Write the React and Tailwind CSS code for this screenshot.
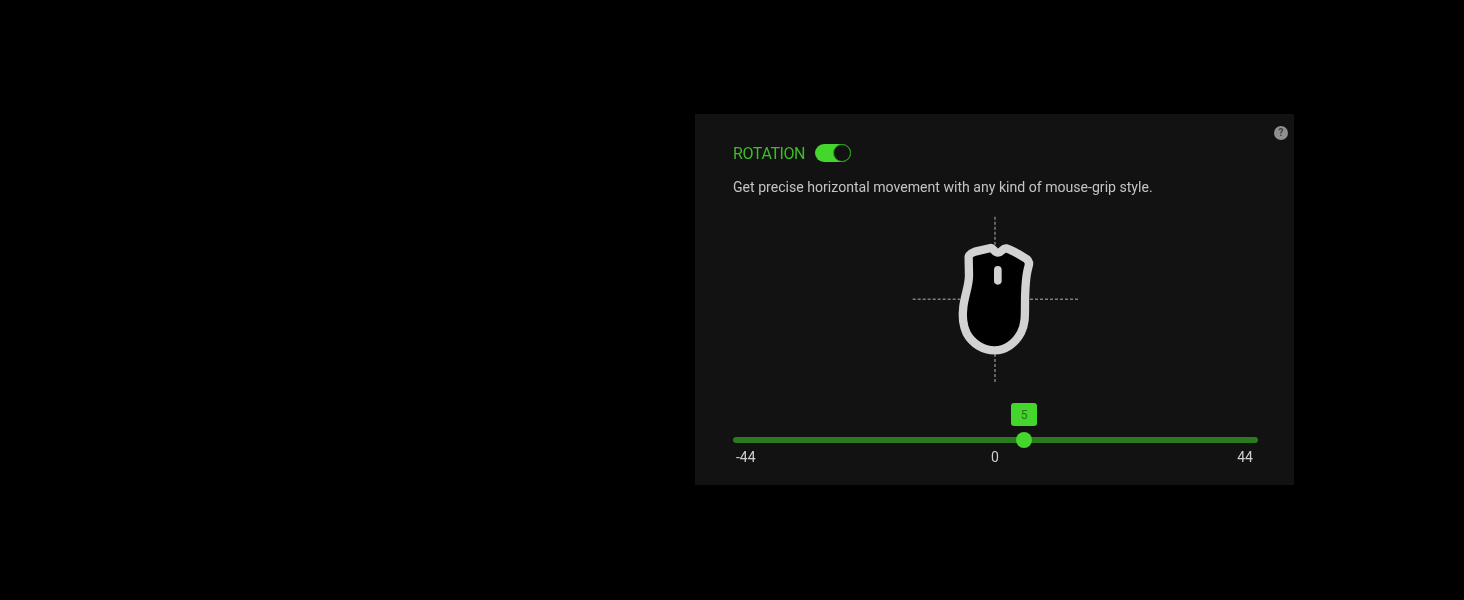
export default function App() {
  return (
    <div className="min-h-[600px] bg-black pl-[695px] pt-[114px] font-['Roboto',sans-serif]">
      <div className="h-[371px] w-[599px] bg-[#121212]">
        <div className="relative flex h-[371px] flex-col pl-[38px] pr-[36px] pt-[29px] blur-[0.4px]">
          <div className="absolute right-[6px] top-[12px] flex h-[14px] w-[14px] items-center justify-center rounded-full bg-[#8f8f8f] text-[10px] font-bold leading-none text-[#3c3c3c]">?</div>

          <div className="flex h-[19px] items-center gap-[10px]">
            <span className="w-[72px] translate-y-[1px] whitespace-nowrap text-[16px] leading-[19px] tracking-[-0.4px] text-[#3dbb29]">ROTATION</span>
            <div className="flex h-[18px] w-[36px] items-center justify-end rounded-full bg-[#44d62c]">
              <div className="h-[18px] w-[18px] rounded-full border-[1.5px] border-[#2f9a20] bg-[#121212]" />
            </div>
          </div>

          <p className="mt-[15px] h-[20px] text-[14.1px] leading-[20px] text-[#c4c4c4]">Get precise horizontal movement with any kind of mouse-grip style.</p>

          <div className="mt-[13px] flex justify-center pr-[1px]">
            <svg width="190" height="180" viewBox="0 0 570 540" fill="none">
              <g stroke="#7d7d7d" strokeWidth="4.5" strokeDasharray="9 6">
                <path d="M285 20V105" />
                <path d="M285 432V518" />
                <path d="M38 268H180" />
                <path d="M390 268H536" />
              </g>
              <path
                d="M206 146C204 136 212 130 225 125L272 114C280 114 283 128 294 128C305 128 308 114 318 115C340 122 362 136 380 147C388 154 388 164 385 172C375 205 375 250 375 290C375 320 375 345 363 368C345 402 315 421 284 421C250 421 218 402 200 370C188 345 186 320 190 290C194 255 208 225 207 195Z"
                fill="#000"
                stroke="#d2d2d2"
                strokeWidth="25"
                strokeLinejoin="round"
              />
              <rect x="282" y="168" width="23" height="56" rx="11.5" fill="#d2d2d2" />
            </svg>
          </div>

          <div className="relative mt-[47px] h-[6px] w-[525px] rounded-full bg-[#2c7a20]">
            <div className="absolute left-[278px] top-[-34px] flex h-[23px] w-[26px] items-center justify-center rounded-[3px] bg-[#44d62c] text-[12px] leading-none text-[#1f7a12]">5</div>
            <div className="absolute left-[283px] top-[-5px] h-[16px] w-[16px] rounded-full bg-[#44d62c]" />
          </div>

          <div className="mt-[4px] flex w-[525px] justify-between pl-[3px] pr-[5px] text-[14px] leading-[20px] text-[#cfcfcf]">
            <span>-44</span>
            <span className="pr-[3px]">0</span>
            <span>44</span>
          </div>
        </div>
      </div>
    </div>
  );
}
